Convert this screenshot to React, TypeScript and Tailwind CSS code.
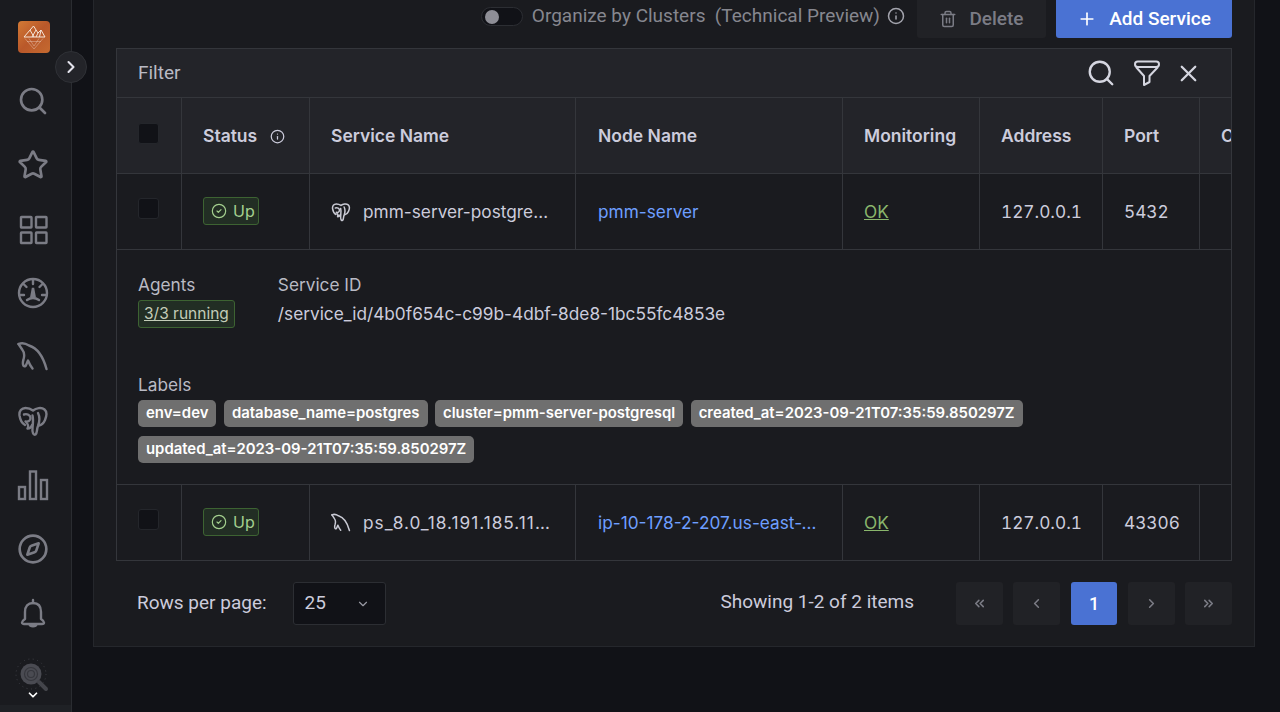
import { Search, Star, Compass, Info, Trash2, Plus, X, ChevronRight, ChevronLeft, ChevronDown, ChevronsLeft, ChevronsRight, CircleCheck } from 'lucide-react'

const sideIconClass = 'h-[32px] w-[32px] text-[#7b7c85]'

function LogoMark() {
	return (
		<div className="ml-[1px] flex h-[32px] w-[32px] items-center justify-center rounded-[4px] bg-gradient-to-br from-[#d37a35] via-[#b9582a] to-[#c56a30]">
			<svg viewBox="0 0 32 32" className="h-[32px] w-[32px]" fill="none" stroke="#f5e6da" strokeWidth="1">
				<path d="M6 16 L15.5 5 L20 12 L23 9 L27 16 Z M12 9 L16 16 M18 9 L14 16 M20 12 L18 16 M23 9 L21.5 16" />
				<path d="M7 17.5 L16 28 L25 17.5 M11 17.5 L16 25 L21 17.5 M9 20.5 H23" opacity="0.35" />
			</svg>
		</div>
	)
}

function GridIcon() {
	return (
		<svg viewBox="0 0 32 32" className={sideIconClass} fill="none" stroke="currentColor" strokeWidth="2.4">
			<rect x="4" y="4" width="10.5" height="10.5" rx="0.5" />
			<rect x="19" y="4" width="10.5" height="10.5" rx="0.5" />
			<rect x="4" y="19.5" width="10.5" height="10.5" rx="0.5" />
			<rect x="19" y="19.5" width="10.5" height="10.5" rx="0.5" />
		</svg>
	)
}

function GaugeIcon() {
	return (
		<svg viewBox="0 0 32 32" className={sideIconClass} fill="none" stroke="currentColor" strokeWidth="2.4" strokeLinecap="round">
			<circle cx="16" cy="16" r="14" />
			<path d="M16 2.5 V7 M6.5 7 L9.5 10 M25.5 7 L22.5 10 M3 18 H7 M25 18 H29" />
			<path d="M16 11 L14.5 19 H17.5 Z" fill="currentColor" />
			<path d="M10 23 Q16 19 22 23" />
		</svg>
	)
}

function BarsIcon() {
	return (
		<svg viewBox="0 0 32 32" className={sideIconClass} fill="none" stroke="currentColor" strokeWidth="2.4">
			<rect x="2" y="18" width="6" height="12" />
			<rect x="13" y="2.5" width="6" height="27.5" />
			<rect x="24" y="11" width="6" height="19" />
		</svg>
	)
}

function BellIcon() {
	return (
		<svg viewBox="0 0 32 32" className={sideIconClass} fill="none" stroke="currentColor" strokeWidth="2.4" strokeLinejoin="round">
			<path d="M16 3 V6" strokeLinecap="round" />
			<path d="M8 22 V15 C8 9 11 6 16 6 C21 6 24 9 24 15 V22 C25.5 23 27 24 27 25.5 C27 26.5 26 27 25 27 H7 C6 27 5 26.5 5 25.5 C5 24 6.5 23 8 22 Z" />
			<path d="M12.5 27 C13 30 19 30 19.5 27" />
		</svg>
	)
}

function DolphinIcon({ className }: { className: string }) {
	return (
		<svg viewBox="0 0 32 32" className={className} fill="none" stroke="currentColor" strokeWidth="2.4" strokeLinecap="round" strokeLinejoin="round">
			<path d="M1.5 3 C5 1.5 9 2.5 12 4.5 C20 7 26 15 29.5 28" />
			<path d="M1.5 3 L5.5 9 C7.5 11.5 7.5 15 6.5 18.5 C5 23 6.5 26.5 8.5 25 C9.5 23.5 10 21.5 11 19.5 C12 22 13.5 25 15.5 27.5" />
		</svg>
	)
}

function ElephantIcon({ className }: { className: string }) {
	return (
		<svg viewBox="0 0 32 32" className={className} fill="none" stroke="currentColor" strokeWidth="2.4" strokeLinecap="round" strokeLinejoin="round">
			<path d="M8 20 C4.5 18 3 14 2.5 10.5 C2 6 4.5 3 8.5 3 C11.5 3 14 4 16 5.5 C19 3 24.5 2 27.5 4.5 C30.5 7 29.5 11.5 28 15 C26.5 18.5 25 20 22 20.5" />
			<path d="M7 9.5 C10 8.5 13.5 10 13.5 13 C13.5 16 11 17 8.5 16.5 C11 19 12 21.5 10.5 23.5 C13 23.5 14.5 22 15 20" />
			<path d="M21 8 C23 12 22.5 17 21 21 C19.5 24.5 20.5 28 18.5 29.5 C16.5 30.5 15 27.5 15.5 23 C16 18 16.5 14 15.5 10.5" />
		</svg>
	)
}

function ScanIcon() {
	return (
		<svg viewBox="0 0 36 36" className="h-[36px] w-[36px]" fill="none">
			<circle cx="16" cy="16" r="15" stroke="#3f4046" strokeWidth="1" strokeDasharray="1 3.5" />
			<circle cx="16" cy="16" r="10.5" fill="#4a4b52" />
			<circle cx="16" cy="16" r="6.5" stroke="#36373d" strokeWidth="1.2" />
			<circle cx="16" cy="16" r="3.5" stroke="#36373d" strokeWidth="1.2" />
			<path d="M24 24 L31 31" stroke="#44454b" strokeWidth="4" strokeLinecap="round" />
		</svg>
	)
}

function Sidebar() {
	return (
		<nav className="relative flex h-[712px] w-[72px] shrink-0 flex-col items-center border-r border-[#2a2c31] bg-[#1a1b1f] pr-[5px] pt-[21px]">
			<LogoMark />
			<div className="mt-[32px] flex flex-col items-center gap-[32px]">
				<Search className={sideIconClass} strokeWidth={2} />
				<Star className={sideIconClass} strokeWidth={2} />
				<GridIcon />
				<GaugeIcon />
				<DolphinIcon className={sideIconClass} />
				<ElephantIcon className={sideIconClass} />
				<BarsIcon />
				<Compass className={sideIconClass} strokeWidth={2} />
				<BellIcon />
			</div>
			<div className="mt-[29px] flex flex-col items-center">
				<ScanIcon />
			</div>
			<ChevronDown className="absolute left-[26px] top-[688px] h-[14px] w-[14px] text-white" strokeWidth={3} />
			<div className="absolute bottom-0 left-0 h-[7px] w-full bg-[#1f2125]" />
			<div className="absolute left-[55px] top-[51px] flex h-[32px] w-[32px] items-center justify-center rounded-full border border-[#2f3136] bg-[#232429]">
				<ChevronRight className="h-[20px] w-[20px] text-[#e3e3ec]" strokeWidth={2.5} />
			</div>
		</nav>
	)
}

function Toolbar() {
	return (
		<div className="flex h-[48px] items-start justify-end font-['Roboto',sans-serif]">
			<div className="mt-[7px] flex h-[19px] w-[42px] items-center rounded-full border border-[#2c2e33] bg-[#111217] pl-[3px]">
				<div className="h-[14px] w-[14px] rounded-full bg-[#8e8e96]" />
			</div>
			<span className="ml-[9px] mt-[4px] whitespace-pre text-[19px] leading-[24px] text-[#86878f]">Organize by Clusters  (Technical Preview)</span>
			<Info className="ml-[7px] mt-[7px] h-[18px] w-[18px] text-[#a3a4ad]" strokeWidth={2} />
			<button className="ml-[12px] flex h-[38px] w-[129px] items-center justify-center gap-[12px] rounded-b-[3px] bg-[#212226] text-[19px] font-medium text-[#7b7c85]">
				<Trash2 className="h-[18px] w-[18px]" strokeWidth={2} />
				Delete
			</button>
			<button className="ml-[10px] flex h-[38px] w-[176px] items-center justify-center gap-[12px] rounded-b-[3px] bg-[#4a72d3] text-[19px] font-medium text-white">
				<Plus className="h-[20px] w-[20px]" strokeWidth={2} />
				Add Service
			</button>
		</div>
	)
}

function UpBadge() {
	return (
		<span className="inline-flex h-[28px] w-[56px] items-center gap-[6px] rounded-[3px] border border-[#3d6332] bg-[#222e24] pl-[7px] text-[16px] text-[#a4d08f]">
			<CircleCheck className="h-[16px] w-[16px]" strokeWidth={1.75} />
			Up
		</span>
	)
}

function Checkbox() {
	return <div className="mb-[6px] h-[21px] w-[21px] rounded-[3px] border border-[#24262b] bg-[#111217]" />
}

function Chip({ children }: { children: string }) {
	return (
		<span className="inline-flex h-[27px] items-center rounded-[5px] bg-[#6f6f6f] px-[8px] text-[14.9px] font-semibold text-white">
			{children}
		</span>
	)
}

const headerCell = 'border-b border-r border-[#34363b] bg-[#232429] pl-[21px] pt-[1px] text-left text-[17.5px] font-semibold text-[#ccccdc]'
const bodyCell = 'border-b border-r border-[#34363b] pl-[21px] text-[#ccccdc]'
const okClass = 'text-[#8ab66c] underline'

function ServiceRow({ icon, name, nameClass, node, port }: { icon: React.ReactNode; name: string; nameClass: string; node: string; port: string }) {
	return (
		<tr className="h-[76px]">
			<td className={bodyCell}>
				<Checkbox />
			</td>
			<td className={bodyCell}>
				<UpBadge />
			</td>
			<td className={bodyCell}>
				<div className="flex items-center gap-[12px]">
					{icon}
					<span className={nameClass}>{name}</span>
				</div>
			</td>
			<td className={bodyCell}>
				<div className="ml-[1px] w-[219px] truncate text-[#6e9fff]">{node}</div>
			</td>
			<td className={bodyCell}>
				<span className={okClass}>OK</span>
			</td>
			<td className={`${bodyCell} tabular-nums`}>127.0.0.1</td>
			<td className={`${bodyCell} tabular-nums`}>{port}</td>
			<td className="border-b border-[#34363b]" />
		</tr>
	)
}

function ServicesTable() {
	return (
		<div className="overflow-hidden border-l border-r border-t border-[#34363b] font-['Inter',sans-serif] text-[17.25px]">
			<div className="flex h-[49px] items-center justify-between border-b border-[#34363b] bg-[#232429] pl-[21px] pr-[29px]">
				<span className="font-['Roboto',sans-serif] text-[19px] text-[#b9bac4]">Filter</span>
				<div className="flex items-center text-[#d5d6e0]">
					<Search className="h-[30px] w-[30px]" strokeWidth={1.9} />
					<svg viewBox="0 0 28 28" className="ml-[17px] h-[28px] w-[28px]" fill="none" stroke="currentColor" strokeWidth="2" strokeLinejoin="round">
						<rect x="2" y="2.5" width="24" height="5.5" rx="2.75" />
						<path d="M3 8 L11 17 V26 L16.5 23 V17 L25 8" />
					</svg>
					<X className="ml-[14px] h-[27px] w-[27px]" strokeWidth={2} />
				</div>
			</div>
			<table className="w-[1190px] table-fixed border-separate border-spacing-0">
				<colgroup>
					<col className="w-[65px]" />
					<col className="w-[128px]" />
					<col className="w-[266px]" />
					<col className="w-[267px]" />
					<col className="w-[137px]" />
					<col className="w-[123px]" />
					<col className="w-[97px]" />
					<col className="w-[107px]" />
				</colgroup>
				<thead>
					<tr className="h-[76px]">
						<th className={headerCell}>
							<Checkbox />
						</th>
						<th className={headerCell}>
							<div className="flex items-center gap-[13px]">
								Status
								<Info className="h-[15px] w-[15px]" strokeWidth={2} />
							</div>
						</th>
						<th className={headerCell}>Service Name</th>
						<th className={headerCell}>
							<span className="ml-[1px]">Node Name</span>
						</th>
						<th className={headerCell}>Monitoring</th>
						<th className={headerCell}>Address</th>
						<th className={headerCell}>Port</th>
						<th className="border-b border-[#34363b] bg-[#232429] pl-[21px] pt-[1px] text-left text-[17.5px] font-semibold text-[#ccccdc]">Options</th>
					</tr>
				</thead>
				<tbody>
					<ServiceRow
						icon={<ElephantIcon className="h-[20px] w-[20px] text-[#c8c9d3]" />}
						name="pmm-server-postgresql"
						nameClass="w-[189px] truncate"
						node="pmm-server"
						port="5432"
					/>
					<tr className="h-[235px]">
						<td colSpan={8} className="border-b border-[#34363b] pl-[21px] pt-[23px] align-top text-[#ccccdc]">
							<div className="flex gap-[43px]">
								<div>
									<div className="leading-[24px] text-[#b9bac4]">Agents</div>
									<span className="mt-[3px] inline-flex h-[28px] items-center rounded-[3px] border border-[#3d6332] bg-[#222e24] px-[5px] text-[15.5px] text-[#c3ccb8] underline">
										3/3 running
									</span>
								</div>
								<div>
									<div className="leading-[24px] text-[#b9bac4]">Service ID</div>
									<div className="mt-[3px] leading-[27px]">/service_id/4b0f654c-c99b-4dbf-8de8-1bc55fc4853e</div>
								</div>
							</div>
							<div className="mt-[45px] leading-[24px] text-[#b9bac4]">Labels</div>
							<div className="mt-[3px] flex w-[1000px] flex-wrap gap-x-[7.5px] gap-y-[9px]">
								<Chip>env=dev</Chip>
								<Chip>database_name=postgres</Chip>
								<Chip>cluster=pmm-server-postgresql</Chip>
								<Chip>created_at=2023-09-21T07:35:59.850297Z</Chip>
								<Chip>updated_at=2023-09-21T07:35:59.850297Z</Chip>
							</div>
						</td>
					</tr>
					<ServiceRow
						icon={<DolphinIcon className="h-[20px] w-[20px] text-[#c8c9d3]" />}
						name="ps_8.0_18.191.185.115_3306"
						nameClass="w-[187px] truncate tracking-[1px]"
						node="ip-10-178-2-207.us-east-2.compute.internal"
						port="43306"
					/>
				</tbody>
			</table>
		</div>
	)
}

function PageButton({ children, active }: { children: React.ReactNode; active?: boolean }) {
	return (
		<button
			className={
				active
					? 'flex h-[43px] w-[46.8px] items-center justify-center rounded-[3px] bg-[#4a72d3] text-[18px] font-medium text-white'
					: 'flex h-[43px] w-[46.8px] items-center justify-center rounded-[3px] bg-[#212226] text-[#7b7c85]'
			}
		>
			{children}
		</button>
	)
}

function Pagination() {
	return (
		<div className="mt-[21px] flex items-center font-['Roboto',sans-serif] text-[19px] text-[#ccccdc]">
			<span className="ml-[21px]">Rows per page:</span>
			<div className="ml-[26px] flex h-[43px] w-[93px] items-center justify-between rounded-[3px] border border-[#2c2e33] bg-[#111217] pl-[11px] pr-[15px]">
				25
				<ChevronDown className="h-[14px] w-[14px] text-[#9a9ba4]" strokeWidth={2} />
			</div>
			<span className="mb-[3px] ml-auto">Showing 1-2 of 2 items</span>
			<div className="ml-[42px] flex gap-[10.5px]">
				<PageButton>
					<ChevronsLeft className="h-[15px] w-[15px]" strokeWidth={2.5} />
				</PageButton>
				<PageButton>
					<ChevronLeft className="h-[15px] w-[15px]" strokeWidth={2.5} />
				</PageButton>
				<PageButton active>1</PageButton>
				<PageButton>
					<ChevronRight className="h-[15px] w-[15px]" strokeWidth={2.5} />
				</PageButton>
				<PageButton>
					<ChevronsRight className="h-[15px] w-[15px]" strokeWidth={2.5} />
				</PageButton>
			</div>
		</div>
	)
}

export default function App() {
	return (
		<div className="flex h-[712px] w-[1280px] overflow-hidden bg-[#111217]">
			<Sidebar />
			<main className="pl-[21px]">
				<div className="h-[647px] w-[1162px] border-b border-r border-l border-[#25272c] bg-[#1a1b1f] px-[22px]">
					<Toolbar />
					<ServicesTable />
					<Pagination />
				</div>
			</main>
		</div>
	)
}
